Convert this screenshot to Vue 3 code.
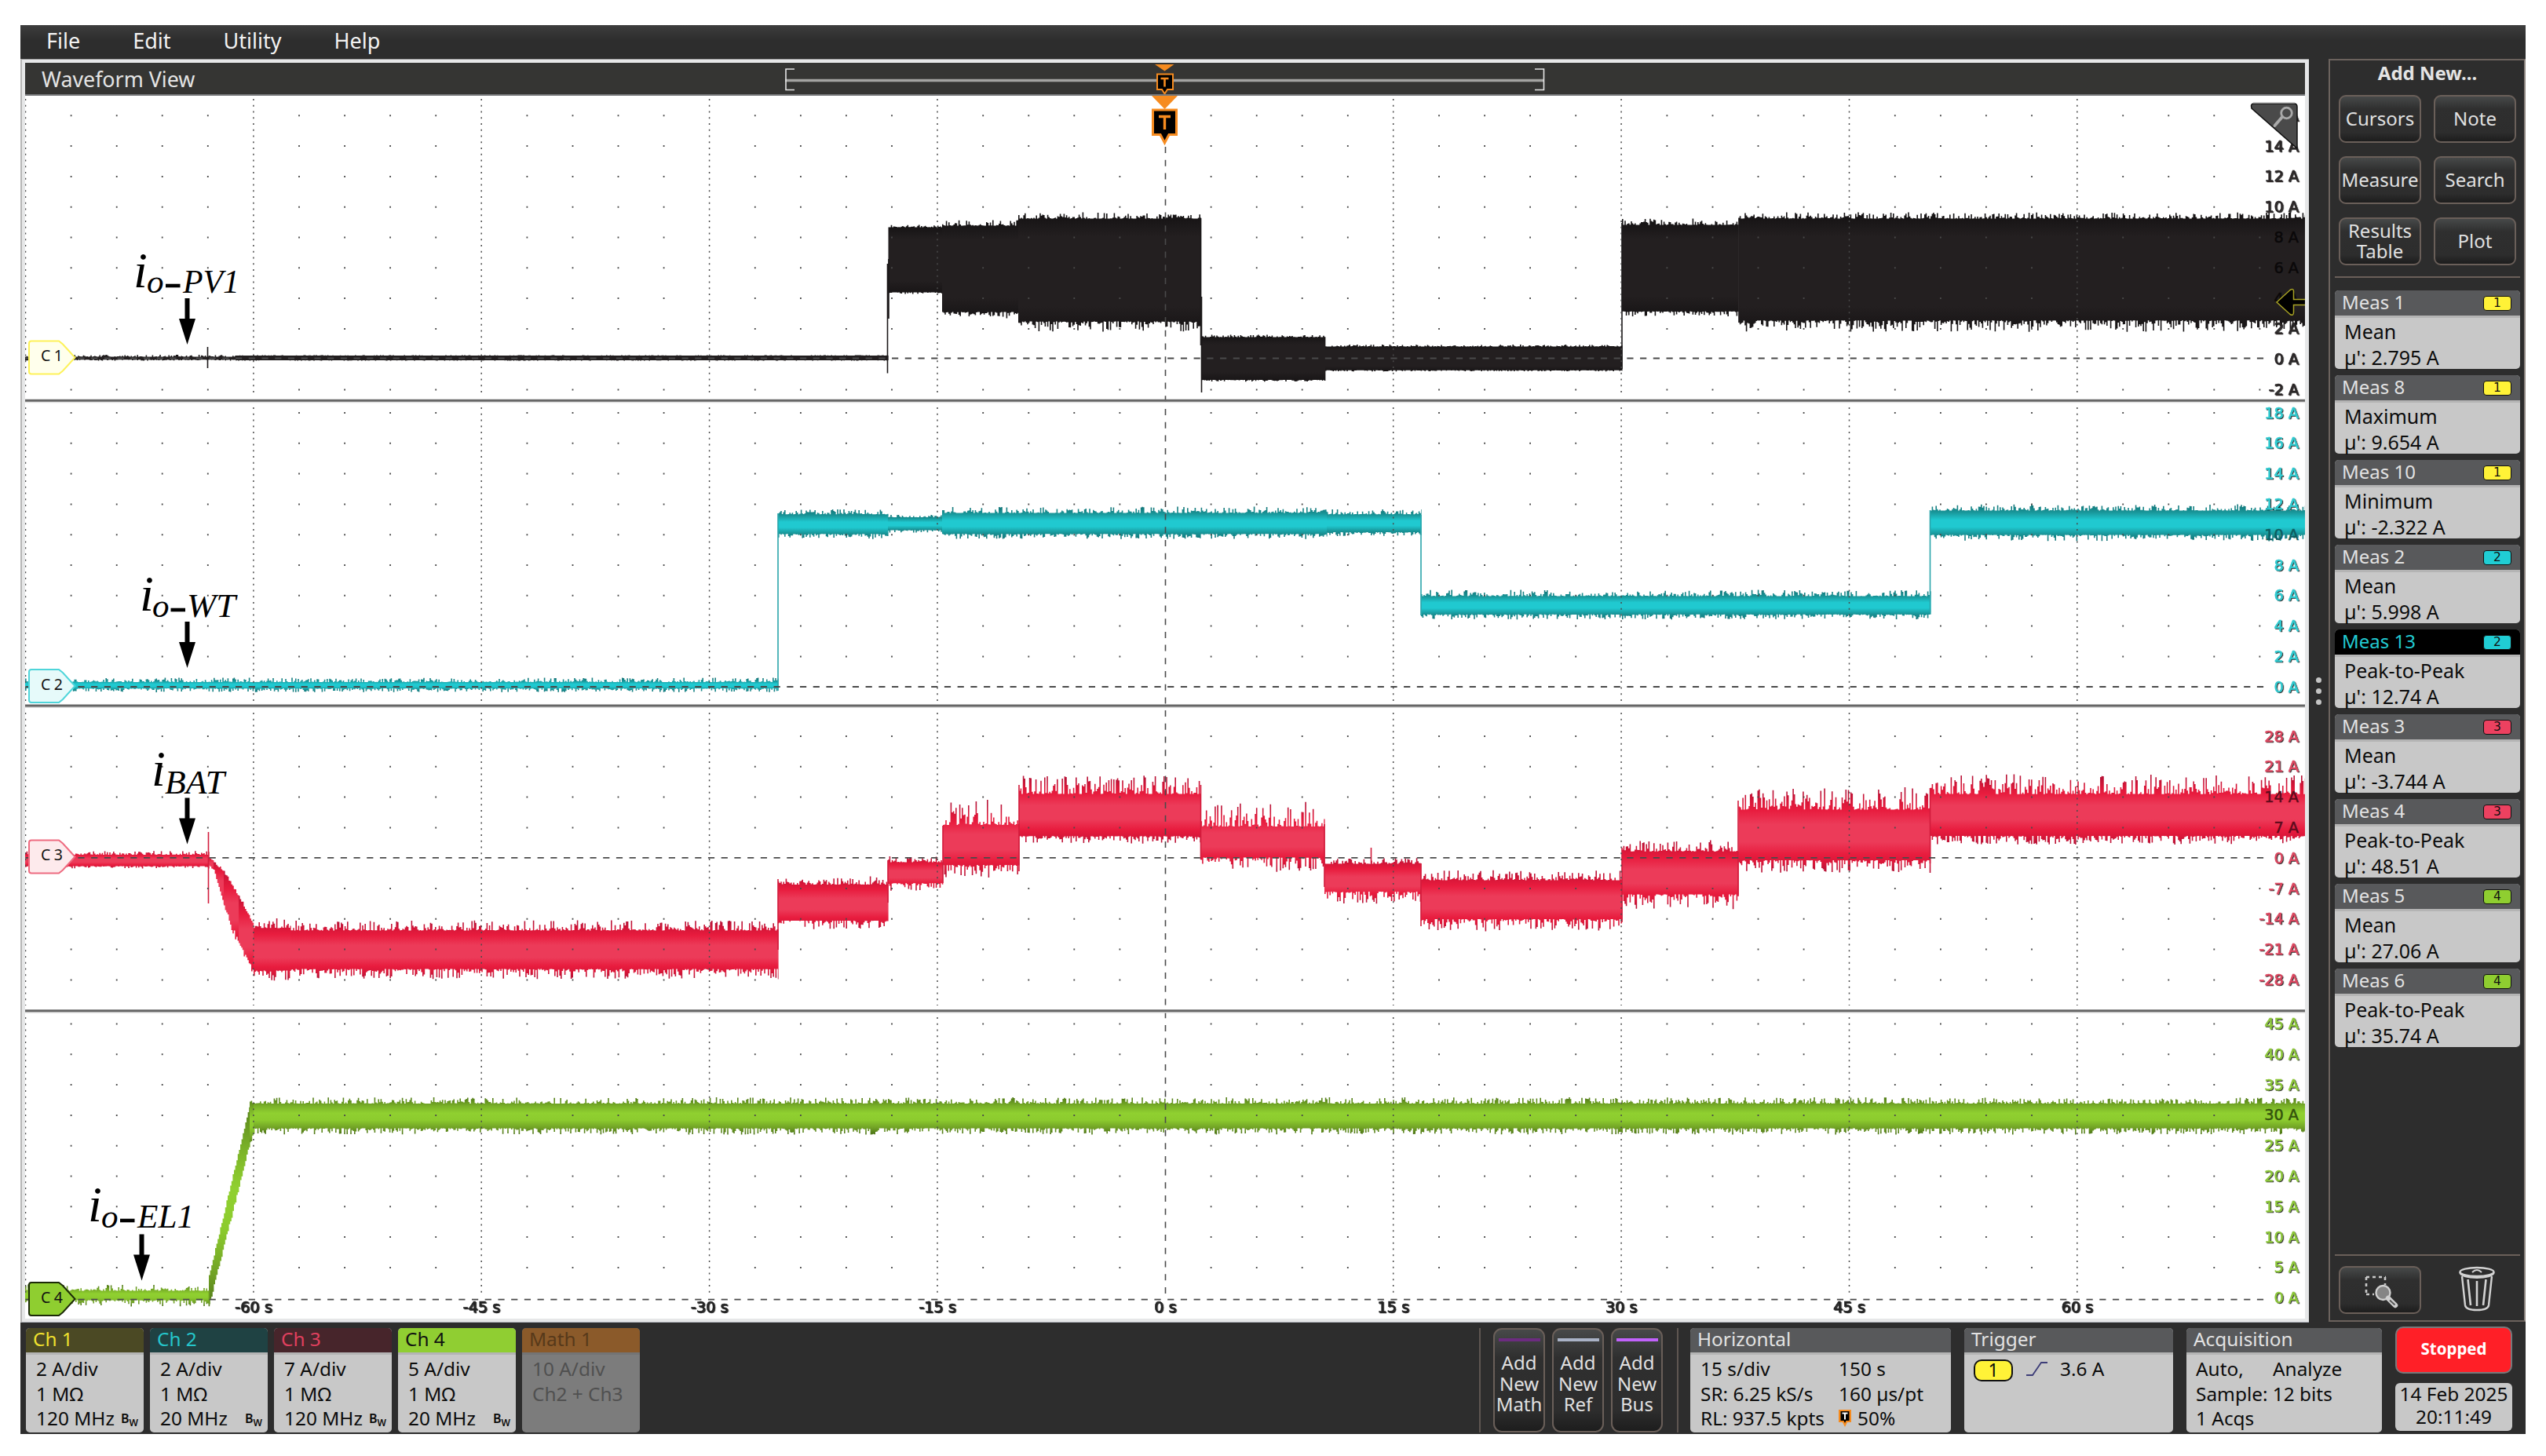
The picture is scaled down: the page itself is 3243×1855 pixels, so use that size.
<template>
  <div class="scope">
    <nav class="menu">
      <span v-for="m in menu" :key="m">{{ m }}</span>
    </nav>

    <div class="middle">
      <main class="view">
        <div class="view-head">
          <h1>Waveform View</h1>
          <svg class="navigator" width="970" height="40" viewBox="999 80 970 40">
            <path d="M1000 102.5H1967" stroke="#a3a3a1" stroke-width="3.4" />
            <path d="M1012 88H1001V114.5H1012M1955 88H1966.5V114.5H1955" fill="none" stroke="#e6e6e6" stroke-width="1.6" />
            <path d="M1471 82H1495.500L1483.500 90.500Z" fill="#f68b1f" />
            <path d="M1474 94.500H1494V114H1487L1483.500 119.500L1480 114H1474Z" fill="#000" stroke="#f68b1f" stroke-width="2" />
            <path d="M1478.500 100H1488.500M1483.500 100V110.500" stroke="#f68b1f" stroke-width="2.600" />
          </svg>
        </div>

        <svg class="plot" width="2904" height="1558" viewBox="32 122 2904 1558">
          <defs>
            <template v-for="t in traces" :key="t.id">
              <linearGradient v-for="(s, i) in t.shapes" :id="t.id + i" :key="i" gradientUnits="userSpaceOnUse" x1="0" x2="0" :y1="s.y1" :y2="s.y2">
                <stop v-for="(c, k) in t.stops" :key="k" :offset="c[0]" :stop-color="c[1]" />
              </linearGradient>
            </template>
            <filter id="shade" x="-20%" y="-20%" width="150%" height="150%">
              <feDropShadow dx="1.2" dy="1" stdDeviation="0.2" flood-color="#000" flood-opacity="0.85" />
            </filter>
          </defs>

          <g v-for="t in traces" :key="t.id">
            <path v-for="(s, i) in t.shapes" :key="i" :d="s.d" :fill="`url(#${t.id}${i})`" />
            <path :d="t.spikes" :stroke="t.edge" stroke-width="1.6" fill="none" />
          </g>

          <!-- graticule -->
          <path :d="gridDots" stroke="#4a4a4a" stroke-width="1.8" />
          <g stroke="#4a4a4a" stroke-width="1.5" stroke-dasharray="2 5.75">
            <path v-for="p in columns" :key="p" :d="p" />
          </g>
          <path d="M1484.500 187V1652" stroke="#4a4a4a" stroke-width="1.6" stroke-dasharray="8 8.7" />
          <path v-for="y in zeros" :key="y" :d="`M32.500 ${y}H2885`" stroke="#4a4a4a" stroke-width="1.8" stroke-dasharray="8.2 8.520" />
          <g v-for="y in [510.3, 899, 1287.8]" :key="y">
            <path :d="`M32 ${y + 2}H2936`" stroke="#dcdcdc" stroke-width="2" />
            <path :d="`M32 ${y}H2936`" stroke="#666" stroke-width="3" />
          </g>

          <!-- axis labels -->
          <g class="axis" text-anchor="end">
            <text v-for="l in yLabels" :key="l.key" x="2928" :y="l.y" :fill="l.color" :stroke="l.color" :filter="l.dim ? undefined : 'url(#shade)'">{{ l.text }}</text>
          </g>
          <g class="axis" text-anchor="middle" fill="#222" stroke="#222">
            <text v-for="(s, i) in seconds" :key="s" :x="322.900 + i * 290.360" y="1671.500" filter="url(#shade)">{{ s }} s</text>
          </g>

          <!-- channel handles -->
          <g v-for="b in handles" :key="b.text" class="handle">
            <path :d="`M40 ${b.y - 21}H75L80 ${b.y - 17}L95.500 ${b.y}L80 ${b.y + 17}L75 ${b.y + 21}H40Q37 ${b.y + 21} 37 ${b.y + 18}V${b.y - 18}Q37 ${b.y - 21} 40 ${b.y - 21}Z`" :fill="b.fill" :stroke="b.stroke" stroke-width="2" />
            <text x="52" :y="b.y + 4.500" textLength="28" lengthAdjust="spacing">{{ b.text }}</text>
          </g>

          <!-- annotations -->
          <g v-for="n in notes" :key="n.tail">
            <text class="sym" :x="n.ix" :y="n.iy">i</text>
            <text v-if="n.ox" class="sub" :x="n.ox" :y="n.sy">o</text>
            <path v-if="n.ox" :d="`M${n.dx} ${n.sy - 9}h18.500`" stroke="#000" stroke-width="4.600" />
            <text class="sub" :x="n.tx" :y="n.sy" :textLength="n.tw" lengthAdjust="spacingAndGlyphs">{{ n.tail }}</text>
            <path :d="`M${n.ax} ${n.ay}v27`" stroke="#000" stroke-width="6" />
            <path :d="`M${n.ax - 10.500} ${n.ay + 26}h21l-10.500 33Z`" fill="#000" />
          </g>

          <!-- trigger position, trigger level, zoom corner -->
          <path d="M1467 122H1500L1483.500 139Z" fill="#f68b1f" />
          <path d="M1468.500 140H1498.500V171.500H1489L1483.500 182L1478 171.500H1468.500Z" fill="#000" stroke="#f68b1f" stroke-width="3" />
          <path d="M1476 148.500H1491M1483.500 148.500V165" stroke="#f68b1f" stroke-width="3.400" />
          <path d="M2900 385L2917 369.500Q2921.500 367 2921.500 371V381.500H2940V388.500H2921.500V398Q2921.500 403 2917 400.500Z" fill="#000" stroke="#a8a224" stroke-width="1.500" />
          <path d="M2871 132H2922Q2926 132 2926 136V189L2868 138Q2866 132 2871 132Z" fill="#4a4a4a" stroke="#111" stroke-width="1.500" />
          <path d="M2870 131.200H2923" stroke="#9a9a9a" stroke-width="1.500" />
          <circle cx="2912.500" cy="144" r="6.800" fill="none" stroke="#a9a9a9" stroke-width="2.800" />
          <path d="M2907 149L2897.500 160" stroke="#a9a9a9" stroke-width="3.800" stroke-linecap="round" />
        </svg>
      </main>

      <div class="grip"><i></i><i></i><i></i></div>

      <aside class="side">
        <h2>Add New...</h2>
        <div class="add-grid">
          <button v-for="b in addButtons" :key="b">{{ b }}</button>
        </div>
        <div class="meas-list">
          <div v-for="m in measurements" :key="m.name" class="meas" :class="{ selected: m.name === 'Meas 13' }">
            <div class="meas-head">
              <span>{{ m.name }}</span>
              <b :class="'src' + m.ch">{{ m.ch }}</b>
            </div>
            <div class="meas-body">
              <div>{{ m.kind }}</div>
              <div>µ': {{ m.value }} A</div>
            </div>
          </div>
        </div>
        <div class="tools">
          <button>
            <svg width="50" height="50" viewBox="3006 1618 50 50" fill="none">
              <path d="M3013 1626H3038M3013 1626V1648M3037 1626V1636M3013 1648H3023" stroke="#c9c9c9" stroke-width="2.600" stroke-dasharray="4 4" />
              <circle cx="3034.500" cy="1646" r="9" fill="#858585" stroke="#d0d0d0" stroke-width="2.400" />
              <path d="M3041 1653L3050 1662" stroke="#d0d0d0" stroke-width="6.500" stroke-linecap="round" />
              <path d="M3043 1655.500L3049.500 1661.500" stroke="#555" stroke-width="2" />
            </svg>
          </button>
          <svg width="48" height="58" viewBox="3131 1614 48 58" fill="none" stroke="#d2d2d2" stroke-width="2.400">
            <ellipse cx="3155" cy="1621.500" rx="21.500" ry="5.500" />
            <path d="M3133.500 1622C3133.500 1631 3176.500 1631 3176.500 1622" />
            <path d="M3136 1627L3140 1664Q3141 1670 3155 1670Q3169 1670 3170 1664L3174 1627" />
            <path d="M3143.500 1631L3147 1664M3155 1633V1665M3166.500 1631L3163 1664" stroke-width="2.600" />
            <path d="M3149 1622Q3155 1616 3161 1622" stroke-width="2" />
          </svg>
        </div>
      </aside>
    </div>

    <footer class="bar">
      <div class="channels">
        <div v-for="c in channels" :key="c.name" class="card ch" :class="c.cls">
          <div class="card-head">{{ c.name }}</div>
          <div class="card-body">
            <div v-for="l in c.lines" :key="l">{{ l }}</div>
            <span v-if="c.bw" class="bw">B<sub>W</sub></span>
          </div>
        </div>
      </div>

      <div class="adders">
        <button v-for="a in ['Math', 'Ref', 'Bus']" :key="a" :class="a.toLowerCase()">
          <i></i>
          <span>Add<br>New<br>{{ a }}</span>
        </button>
      </div>

      <div class="card horizontal">
        <div class="card-head">Horizontal</div>
        <div class="card-body cols">
          <div>15 s/div</div><div>150 s</div>
          <div>SR: 6.25 kS/s</div><div>160 µs/pt</div>
          <div>RL: 937.5 kpts</div>
          <div class="pos">
            <svg width="16" height="22" viewBox="0 0 16 22">
              <path d="M0 0H16V16H11L8 22L5 16H0Z" fill="#f68b1f" />
              <path d="M2.500 2H13.500V14H9.500L8 17L6.500 14H2.500Z" fill="#000" />
              <path d="M4.500 4.500H11.500M8 4.500V12.500" stroke="#fff" stroke-width="2" />
            </svg>
            50%
          </div>
        </div>
      </div>

      <div class="card trigger">
        <div class="card-head">Trigger</div>
        <div class="card-body level">
          <b>1</b>
          <svg width="28" height="20" viewBox="0 0 28 20">
            <path d="M0 18H8L19 2H27" fill="none" stroke="#3d3d78" stroke-width="1.800" />
          </svg>
          <span>3.6 A</span>
        </div>
      </div>

      <div class="card acquisition">
        <div class="card-head">Acquisition</div>
        <div class="card-body">
          <div class="mode"><span>Auto,</span><span>Analyze</span></div>
          <div>Sample: 12 bits</div>
          <div>1 Acqs</div>
        </div>
      </div>

      <div class="status">
        <div class="stopped">Stopped</div>
        <div class="clock">14 Feb 2025<br>20:11:49</div>
      </div>
    </footer>
  </div>
</template>

<script setup>
const menu = ['File', 'Edit', 'Utility', 'Help'];
const addButtons = ['Cursors', 'Note', 'Measure', 'Search', 'Results Table', 'Plot'];

const measurements = [
  { name: 'Meas 1', ch: 1, kind: 'Mean', value: '2.795' },
  { name: 'Meas 8', ch: 1, kind: 'Maximum', value: '9.654' },
  { name: 'Meas 10', ch: 1, kind: 'Minimum', value: '-2.322' },
  { name: 'Meas 2', ch: 2, kind: 'Mean', value: '5.998' },
  { name: 'Meas 13', ch: 2, kind: 'Peak-to-Peak', value: '12.74' },
  { name: 'Meas 3', ch: 3, kind: 'Mean', value: '-3.744' },
  { name: 'Meas 4', ch: 3, kind: 'Peak-to-Peak', value: '48.51' },
  { name: 'Meas 5', ch: 4, kind: 'Mean', value: '27.06' },
  { name: 'Meas 6', ch: 4, kind: 'Peak-to-Peak', value: '35.74' }
];

const channels = [
  { name: 'Ch 1', cls: 'c1', lines: ['2 A/div', '1 MΩ', '120 MHz'], bw: true },
  { name: 'Ch 2', cls: 'c2', lines: ['2 A/div', '1 MΩ', '20 MHz'], bw: true },
  { name: 'Ch 3', cls: 'c3', lines: ['7 A/div', '1 MΩ', '120 MHz'], bw: true },
  { name: 'Ch 4', cls: 'c4', lines: ['5 A/div', '1 MΩ', '20 MHz'], bw: true },
  { name: 'Math 1', cls: 'm1', lines: ['10 A/div', 'Ch2 + Ch3'], bw: false }
];

const handles = [
  { text: 'C 1', y: 455.5, fill: '#ffffec', stroke: '#fdf25a' },
  { text: 'C 2', y: 874, fill: '#e6fafa', stroke: '#4fd5da' },
  { text: 'C 3', y: 1091.5, fill: '#fdeaec', stroke: '#ee6b80' },
  { text: 'C 4', y: 1655, fill: '#8fce30', stroke: '#1c2a08' }
];

const notes = [
  { tail: 'PV1', ix: 170, iy: 365.5, ox: 187, sy: 373, dx: 211, tx: 233, tw: 72, ax: 238.5, ay: 380 },
  { tail: 'WT', ix: 178, iy: 777.5, ox: 194, sy: 786, dx: 217.5, tx: 238, tw: 62, ax: 238.5, ay: 792 },
  { tail: 'BAT', ix: 193, iy: 1001, ox: 0, sy: 1010.5, dx: 0, tx: 210, tw: 76, ax: 238.5, ay: 1016.5 },
  { tail: 'EL1', ix: 112, iy: 1556, ox: 129, sy: 1564, dx: 153, tx: 175, tw: 72, ax: 180.5, ay: 1572.5 }
];

const seconds = [-60, -45, -30, -15, 0, 15, 30, 45, 60];

// row = first graticule row, zero = row of 0 A
const panels = [
  { row: 147.3, zero: 456.5, rows: 9, top: 126, end: 504, max: 16, step: 2, color: '#2b2728', dim: [8, 6, 4], dimColor: '#0a0809' },
  { row: 526, zero: 875, rows: 9, top: 519, end: 893, max: 18, step: 2, color: '#2fc9cf', dim: [10], dimColor: '#0b5c60' },
  { row: 938, zero: 1092.8, rows: 8, top: 908, end: 1281, max: 28, step: 7, color: '#dc4760', dim: [14, 7], dimColor: '#5d0b1c' },
  { row: 1304.5, zero: 1655.7, rows: 9, top: 1296, end: 1648, max: 45, step: 5, color: '#8cc63a', dim: [30], dimColor: '#33520c' }
];
const zeros = panels.map((p) => p.zero);

const yLabels = [];
let gridDots = '';
const columns = [];

panels.forEach((p, n) => {
  for (let r = 0; r <= p.rows; r++) {
    const y = p.row + r * 38.8;
    const value = p.max - r * p.step;
    const dim = p.dim.includes(value);
    yLabels.push({
      key: n + ':' + value,
      text: value + ' A',
      y: y + 6.5,
      dim,
      color: dim ? p.dimColor : p.color
    });
    if (value === 0) continue;
    for (let k = 1; k < 50; k++) {
      if (k % 5 === 0 || (k === 49 && Math.abs(value) >= 10)) continue;
      gridDots += `M${(32.5 + k * 58.08).toFixed(1)} ${(y - 1).toFixed(1)}v2`;
    }
  }
  for (let k = 0; k < 10; k++) {
    if (k !== 5) columns.push(`M${(32.5 + k * 290.37).toFixed(1)} ${p.top}V${p.end}`);
  }
});

// small seeded generator keeps the noise the same on every render
let seed = 7;
const rnd = () => {
  seed = (seed * 1664525 + 1013904223) % 4294967296;
  return seed / 4294967296;
};

// segment: [x0, x1, top, bottom, noiseTop, noiseBottom, topEnd, bottomEnd]
const build = ([x0, x1, t, b, nt, nb, t2 = t, b2 = b]) => {
  const up = [];
  const down = [];
  for (let x = x0; x < x1; x += 1.6) {
    const f = (x - x0) / (x1 - x0);
    const next = Math.min(x + 1.6, x1 + 0.6).toFixed(1);
    const a = (t + (t2 - t) * f - nt * (Math.pow(rnd(), 2.8) * 1.6 - 0.3)).toFixed(1);
    const c = (b + (b2 - b) * f + nb * (Math.pow(rnd(), 2.8) * 1.6 - 0.3)).toFixed(1);
    up.push(`${x.toFixed(1)} ${a}L${next} ${a}`);
    down.push(`${next} ${c}L${x.toFixed(1)} ${c}`);
  }
  return {
    d: 'M' + up.join('L') + 'L' + down.reverse().join('L') + 'Z',
    y1: Math.min(t, t2) - nt,
    y2: Math.max(b, b2) + nb
  };
};

const traces = [
  {
    id: 'pv',
    edge: '#1b1819',
    stops: [[0, '#141213'], [0.2, '#231f20'], [0.8, '#231f20'], [1, '#171415']],
    segments: [
      [32, 300, 454, 458.5, 1.6, 0.8],
      [300, 1131, 453, 459, 0.5, 0.5],
      [1131.5, 1200, 289, 373, 2, 2],
      [1200, 1297, 286, 399, 5, 5],
      [1297, 1529.5, 277, 412, 5, 8],
      [1530, 1688, 429, 484.5, 2, 1.5],
      [1688, 2066, 441, 472, 1.6, 1],
      [2066, 2214.5, 285, 398, 5, 4],
      [2214.2, 2936, 277, 411, 5, 9]
    ],
    spikes: 'M264.500 442V469M1130.500 336V475.500M1132 330V406M1529.500 278V440M1530.500 378V500M2066 284V470'
  },
  {
    id: 'wt',
    edge: '#2aa5ab',
    stops: [[0, '#14787b'], [0.18, '#189396'], [0.42, '#20c9d0'], [0.62, '#20c9d0'], [0.84, '#189396'], [1, '#14787b']],
    segments: [
      [32, 991, 868, 878, 3.5, 3],
      [991, 1131, 654, 681.5, 4, 4],
      [1131, 1200, 658.5, 676, 2, 2],
      [1200, 1690, 652, 681.5, 5, 4],
      [1690, 1810, 654, 679, 4, 3],
      [1810, 2459, 758, 784, 5, 4],
      [2459, 2936, 649, 683, 5, 5]
    ],
    spikes: 'M991 654V880M1810 656V784M2458.500 650V780'
  },
  {
    id: 'bat',
    edge: '#d21c3c',
    stops: [[0, '#b91236'], [0.14, '#da1739'], [0.24, '#e81c3e'], [0.42, '#ec3b59'], [0.64, '#ec3b59'], [0.8, '#e81c3e'], [0.9, '#da1739'], [1, '#b91236']],
    segments: [
      [32, 266, 1088, 1104, 3, 2],
      [266, 272, 1092, 1103, 2, 2, 1098, 1109],
      [272, 285, 1098, 1109, 2, 4, 1111, 1154],
      [285, 304, 1111, 1154, 3, 6, 1142, 1203],
      [304, 323, 1142, 1203, 3, 6, 1178, 1239],
      [323, 370, 1180, 1239, 8, 8],
      [370, 991, 1183, 1237, 8, 8],
      [991, 1131, 1125, 1175, 7, 7],
      [1131, 1201, 1097, 1127, 5, 6],
      [1201, 1298, 1045, 1105, 20, 10],
      [1298, 1529.5, 1007, 1067, 15, 6],
      [1529.5, 1687, 1047, 1096, 20, 12],
      [1687, 1810, 1099, 1139, 5, 10],
      [1810, 2066, 1119, 1174, 8, 10],
      [2066, 2214.5, 1082, 1143, 9, 12],
      [2214.5, 2459, 1026, 1099, 18, 10],
      [2459, 2936, 1007, 1067, 16, 7]
    ],
    spikes: 'M265.500 1060V1151M991 1120V1210M1131 1096V1150M1201 1052V1125M1298 1000V1110M1529.500 1000V1095M1687 1050V1130M1746.500 1080V1100M1810 1100V1180M2066 1080V1175M2214 1020V1142M2458.500 1004V1100'
  },
  {
    id: 'el',
    edge: '#6c9c22',
    stops: [[0, '#557f1a'], [0.22, '#7ab128'], [0.42, '#90d030'], [0.62, '#8ccb2e'], [0.85, '#6f9f25'], [1, '#4f7717']],
    segments: [
      [32, 267, 1643, 1658, 5, 5],
      [266, 318, 1626, 1662, 2, 3, 1407, 1456],
      [318, 324, 1405, 1456, 3, 3, 1404, 1439],
      [323, 2936, 1404.5, 1439, 5, 5]
    ],
    spikes: 'M266.500 1644V1662'
  }
].map((t) => ({ ...t, shapes: t.segments.map(build) }));
</script>

<style>
body {
  background: #fff;
}
</style>

<style scoped>
.scope {
  box-sizing: border-box;
  width: 3191px;
  height: 1795px;
  margin: 32px 0 28px 26px;
  background: #2d2d2d;
  font-family: "Noto Sans", "Open Sans", sans-serif;
  font-size: 24.4px;
  color: #e4e4e4;
  display: flex;
  flex-direction: column;
}
.menu {
  height: 43px;
  flex: none;
  box-sizing: border-box;
  padding-left: 33px;
  display: flex;
  gap: 67px;
  line-height: 39px;
  font-size: 27px;
  color: #f2f2f2;
  background: linear-gradient(#3d3d3d, #2d2d2d 45%);
}
.middle {
  display: flex;
  height: 1610px;
  flex: none;
}
.view {
  box-sizing: border-box;
  width: 2915px;
  height: 1610px;
  padding: 4px 5px 4px 4px;
  background: #e6e7e8;
  border-left: 2px solid #b5b5b5;
  border-top: 1px solid #999;
  border-bottom: 1px solid #b5b8c0;
}
.view-head {
  box-sizing: border-box;
  height: 42px;
  background: #353533;
  border-bottom: 2px solid #77797b;
  display: flex;
}
.view-head h1 {
  margin: 0;
  box-sizing: border-box;
  width: 967px;
  padding-left: 21px;
  font-weight: 400;
  font-size: 26.8px;
  line-height: 41px;
}
.navigator,
.plot {
  display: block;
}
.plot {
  background: #fff;
}
.axis text {
  font: 19.3px "DejaVu Sans", sans-serif;
  stroke-width: 0.5px;
}
.handle text {
  font: 19.5px "Noto Sans", sans-serif;
  fill: #111;
}
.sym {
  font: italic 64px "Liberation Serif", "Times New Roman", serif;
}
.sub {
  font: italic 43px "Liberation Serif", "Times New Roman", serif;
}

.grip {
  width: 25px;
  display: flex;
  flex-direction: column;
  align-items: center;
  justify-content: center;
  gap: 7px;
}
.grip i {
  width: 7px;
  height: 7px;
  border-radius: 50%;
  background: #c4c4c4;
}

.side {
  box-sizing: border-box;
  width: 251px;
  height: 1609px;
  border: 2px solid #6b625d;
  border-right-color: #8e8681;
  padding: 0 5px 0 6px;
  display: flex;
  flex-direction: column;
}
.side h2 {
  margin: 0;
  height: 44px;
  line-height: 32px;
  text-align: center;
  font-size: 24px;
  font-weight: 700;
}
button {
  box-sizing: border-box;
  padding: 0 0 2px;
  border: 2px solid #6a5f59;
  border-radius: 9px;
  background: linear-gradient(#474949, #2f2f2f 28%, #2d2d2d 80%, #1d1d1d);
  color: #e0e0e0;
  font: 24px/26px "Noto Sans", sans-serif;
}
.add-grid {
  box-sizing: border-box;
  height: 233px;
  padding: 0 5px;
  display: grid;
  grid-template-columns: 105px 105px;
  grid-auto-rows: 61px;
  justify-content: space-between;
  row-gap: 17px;
  border-bottom: 2px solid #6a5f59;
}
.meas-list {
  flex: 1;
  padding-top: 16px;
  display: flex;
  flex-direction: column;
  gap: 8px;
}
.meas {
  height: 100px;
  border-radius: 5px;
  background: #c8c8c8;
  color: #0c0c0c;
}
.meas-head {
  height: 32px;
  display: flex;
  justify-content: space-between;
  padding: 0 11px 0 9px;
  border-radius: 5px 5px 0 0;
  background: #58595b;
  color: #e2e2e2;
  line-height: 29px;
  font-size: 24px;
}
.meas.selected .meas-head {
  background: #000;
  color: #22cad1;
}
.meas-head b {
  box-sizing: border-box;
  width: 36px;
  height: 19px;
  margin-top: 7px;
  border: 1px solid #111;
  border-radius: 4px;
  color: #111;
  font: 15.5px/17px "DejaVu Sans", sans-serif;
  text-align: center;
}
.src1 { background: #fff237; }
.src2 { background: #20cdd4; }
.src3 { background: #ec4160; }
.src4 { background: #8fce30; }
.meas-body {
  box-sizing: border-box;
  height: 68px;
  padding: 1px 0 0 12px;
  border-top: 3px solid #b4b4b4;
  line-height: 32.500px;
  font-size: 25px;
}
.tools {
  height: 84px;
  flex: none;
  box-sizing: border-box;
  border-top: 2px solid #6a5f59;
  padding: 13px 31px 0 5px;
  display: flex;
  justify-content: space-between;
  align-items: flex-start;
}
.tools button {
  width: 105px;
  height: 61px;
  padding: 0;
  display: flex;
  align-items: center;
  justify-content: center;
}

.bar {
  flex: none;
  height: 142px;
  box-sizing: border-box;
  padding: 7px 0 2px 7px;
  display: flex;
}
.channels {
  display: flex;
  gap: 8px;
  width: 1851px;
}
.card {
  border-radius: 5px;
  background: #c8c8c8;
  color: #0c0c0c;
  height: 133px;
}
.card-head {
  box-sizing: border-box;
  height: 31px;
  padding-left: 9px;
  border-radius: 5px 5px 0 0;
  line-height: 28px;
  background: #58595b;
  color: #e2e2e2;
}
.card-body {
  position: relative;
  border-top: 3px solid #b4b4b4;
  padding: 2px 0 0 13px;
  line-height: 31.500px;
}
.ch {
  width: 150px;
}
.c1 .card-head { background: #4b4924; color: #efe02e; }
.c2 .card-head { background: #1f4243; color: #25c6cb; }
.c3 .card-head { background: #47252b; color: #e0405e; }
.c4 .card-head { background: #90ce32; color: #111; }
.m1 { background: #7c7c7c; }
.m1 .card-head { background: #8b5a2a; color: #57391a; }
.m1 .card-body { color: #505050; border-color: #747474; }
.bw {
  position: absolute;
  right: 7px;
  top: 71px;
  font-size: 16px;
  font-weight: 600;
  line-height: 20px;
}
.bw sub {
  font-size: 12px;
  vertical-align: -4px;
  line-height: 0;
}

.adders {
  box-sizing: border-box;
  width: 254px;
  height: 133px;
  margin-right: 15px;
  padding: 0 18px 0 16px;
  display: flex;
  justify-content: space-between;
  border-left: 2px solid #5e5651;
  border-right: 2px solid #5e5651;
}
.adders button {
  width: 66px;
  height: 133px;
  border-radius: 11px;
  display: flex;
  flex-direction: column;
  align-items: center;
  line-height: 26.700px;
}
.adders i {
  flex: none;
  width: 53px;
  height: 4px;
  margin: 0 0 14px;
}
.adders .math i { background: #6c2c80; }
.adders .ref i { background: #a9b2c6; }
.adders .bus i { background: #c162fb; }
.adders button {
  justify-content: flex-start;
  padding-top: 11px;
}

.horizontal {
  width: 332px;
  margin-right: 17px;
}
.cols {
  display: grid;
  grid-template-columns: 176px 1fr;
  white-space: nowrap;
}
.pos {
  display: flex;
  align-items: center;
  gap: 8px;
}
.trigger {
  width: 266px;
  margin-right: 17px;
}
.level {
  display: flex;
  align-items: center;
  padding-left: 12px;
}
.level b {
  box-sizing: border-box;
  width: 50px;
  height: 28px;
  margin: 4px 17px 0 0;
  border: 2px solid #111;
  border-radius: 10px;
  background: #fff237;
  font-weight: 400;
  font-size: 23px;
  line-height: 23px;
  text-align: center;
}
.level span {
  margin-left: 15px;
}
.acquisition {
  width: 249px;
  margin-right: 17px;
}
.acquisition .card-body {
  padding-left: 12px;
}
.mode span:first-child {
  display: inline-block;
  width: 98px;
}
.status {
  width: 149px;
}
.stopped {
  box-sizing: border-box;
  height: 60px;
  margin-top: -2px;
  border: 2px solid #77787a;
  border-radius: 10px;
  background: #ff1f27;
  color: #fff;
  font-size: 20.5px;
  font-weight: 700;
  line-height: 52px;
  text-align: center;
}
.clock {
  height: 61px;
  margin-top: 12px;
  border-radius: 6px;
  background: #c8c8c8;
  color: #0c0c0c;
  line-height: 28.500px;
  text-align: center;
}
</style>
